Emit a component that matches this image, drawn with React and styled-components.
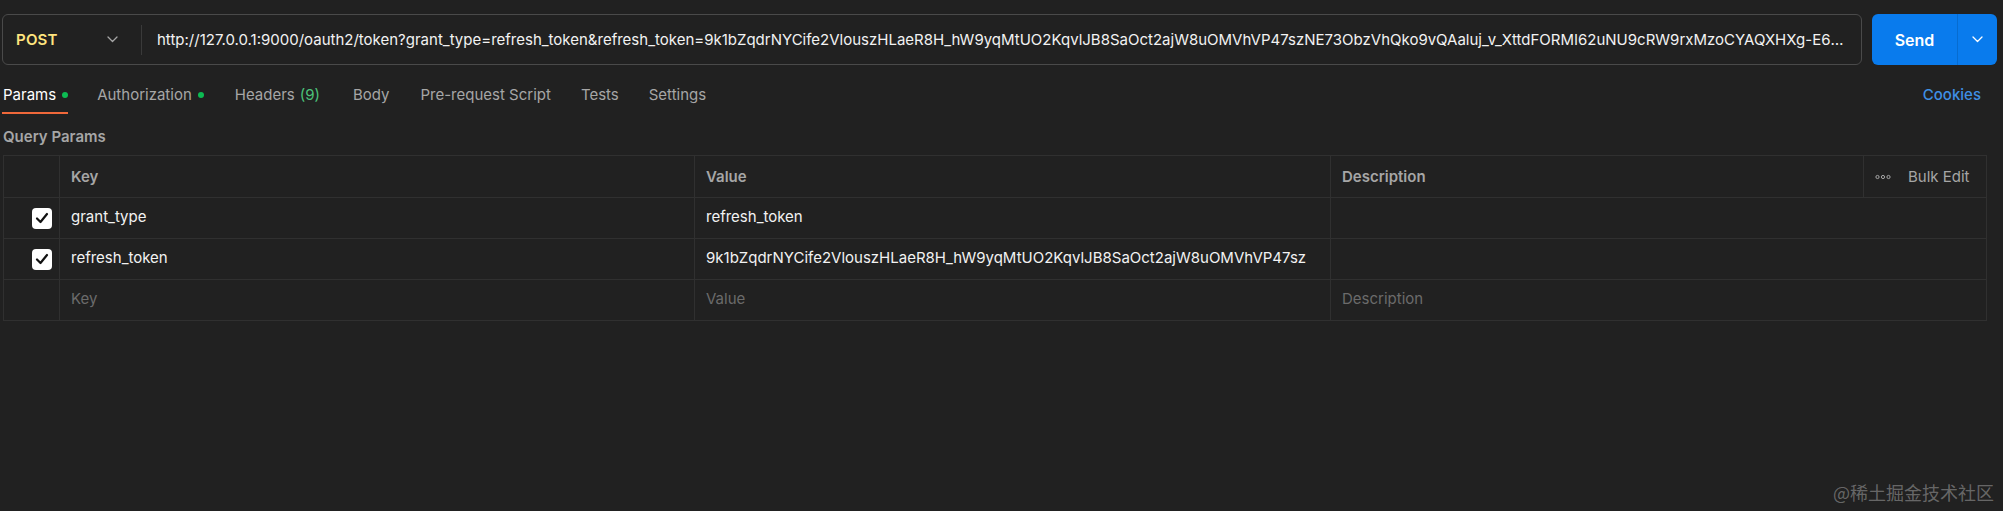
import React from "react";
import styled, { createGlobalStyle } from "styled-components";

const GlobalStyle = createGlobalStyle`
  html, body {
    margin: 0;
    padding: 0;
    background: #212121;
  }
  body {
    font-family: Inter, "Noto Sans", sans-serif;
    color: #ffffff;
    overflow: hidden;
  }
`;

const Page = styled.div`
  position: relative;
  height: 511px;
  padding: 14px 6px 0 2px;
  box-sizing: border-box;
`;

const TopRow = styled.div`
  display: flex;
  gap: 10px;
  height: 51px;
`;

const UrlBox = styled.div`
  flex: 1;
  min-width: 0;
  display: flex;
  align-items: center;
  border: 1px solid #4a4a4a;
  border-radius: 6px;
  box-sizing: border-box;
`;

const Method = styled.div`
  width: 138px;
  flex-shrink: 0;
  display: flex;
  align-items: center;
  justify-content: space-between;
  padding: 0 23px 0 13px;
  box-sizing: border-box;
  color: #ffe47e;
  font-weight: 600;
  font-size: 15px;
  letter-spacing: 0.2px;
`;

const Divider = styled.div`
  width: 1px;
  height: 30px;
  background: #3a3a3a;
  flex-shrink: 0;
`;

const UrlText = styled.div`
  flex: 1;
  min-width: 0;
  padding: 0 8px 0 15px;
  font-size: 15px;
  color: #f2f2f2;
  white-space: nowrap;
  overflow: hidden;
  text-overflow: ellipsis;
`;

const SendButton = styled.div`
  width: 125px;
  display: flex;
  background: #097bed;
  border-radius: 6px;
  overflow: hidden;
`;

const SendLabel = styled.div`
  width: 85px;
  display: flex;
  align-items: center;
  justify-content: center;
  font-weight: 600;
  font-size: 16px;
  color: #ffffff;
  border-right: 1px solid rgba(0, 0, 0, 0.12);
`;

const SendMore = styled.div`
  flex: 1;
  display: flex;
  align-items: center;
  justify-content: center;
`;

const Tabs = styled.div`
  display: flex;
  align-items: flex-end;
  margin-top: 15px;
  padding-right: 16px;
`;

const Tab = styled.div`
  display: flex;
  align-items: center;
  padding: 5px 0 7px 1px;
  margin-right: ${({ $gap }) => $gap || 29}px;
  line-height: 20px;
  font-size: 15px;
  color: ${({ $active }) => ($active ? "#ffffff" : "#a6a6a6")};
  border-bottom: 2px solid
    ${({ $active }) => ($active ? "#f0683a" : "transparent")};
`;

const Dot = styled.span`
  width: 6px;
  height: 6px;
  border-radius: 50%;
  background: #0cbb52;
  margin-left: 6px;
`;

const Count = styled.span`
  color: #4cc27a;
  margin-left: 5px;
`;

const Cookies = styled.div`
  margin-left: auto;
  padding: 5px 0 9px;
  line-height: 20px;
  font-size: 15px;
  font-weight: 500;
  color: #3f8fe4;
`;

const SectionTitle = styled.div`
  margin-top: 13px;
  padding-left: 1px;
  line-height: 20px;
  font-size: 15px;
  font-weight: 600;
  color: #a6a6a6;
`;

const Table = styled.div`
  margin: 8px 10px 0 1px;
  display: grid;
  grid-template-columns: 56px 635px 636px 1fr;
  border-top: 1px solid #303030;
  border-left: 1px solid #303030;
`;

const Cell = styled.div`
  display: flex;
  align-items: center;
  height: ${({ $head }) => ($head ? 42 : 41)}px;
  padding-left: ${({ $check }) => ($check ? 28 : 11)}px;
  padding-bottom: ${({ $head, $check }) => ($head || $check ? 0 : 3)}px;
  box-sizing: border-box;
  border-right: 1px solid #303030;
  border-bottom: 1px solid #303030;
  font-size: 15px;
  font-weight: ${({ $head }) => ($head ? 600 : 400)};
  color: ${({ $head, $ghost }) =>
    $head ? "#a6a6a6" : $ghost ? "#6b6b6b" : "#f2f2f2"};
  white-space: nowrap;
  overflow: hidden;
`;

const CellText = styled.span`
  flex: 1;
`;

const BulkEdit = styled.div`
  width: 123px;
  height: 100%;
  display: flex;
  align-items: center;
  gap: 17px;
  padding-left: 11px;
  box-sizing: border-box;
  border-left: 1px solid #303030;
  font-weight: 400;
  color: #a6a6a6;
`;

const Checkbox = styled.div`
  width: 20px;
  height: 21px;
  border-radius: 4px;
  background: #ffffff;
  display: flex;
  align-items: center;
  justify-content: center;
`;

const Watermark = styled.div`
  position: absolute;
  right: 9px;
  bottom: 6px;
  font-family: "Noto Sans CJK SC", sans-serif;
  font-size: 18px;
  color: rgba(255, 255, 255, 0.32);
`;

function Chevron({ color = "#a6a6a6" }) {
  return (
    <svg width="11" height="7" viewBox="0 0 11 7" fill="none">
      <polyline
        points="1,1 5.5,5.5 10,1"
        stroke={color}
        strokeWidth="1.3"
        strokeLinecap="round"
        strokeLinejoin="round"
      />
    </svg>
  );
}

function Check() {
  return (
    <svg width="14" height="12" viewBox="0 0 14 12" fill="none">
      <polyline
        points="2,6.5 5.5,10 12,2"
        stroke="#111"
        strokeWidth="2.2"
        strokeLinecap="round"
        strokeLinejoin="round"
      />
    </svg>
  );
}

function More() {
  return (
    <svg width="16" height="6" viewBox="0 0 16 6" fill="none">
      {[2.5, 8, 13.5].map((cx) => (
        <circle key={cx} cx={cx} cy="3" r="1.6" stroke="#a6a6a6" strokeWidth="1" />
      ))}
    </svg>
  );
}

const token =
  "9k1bZqdrNYCife2VlouszHLaeR8H_hW9yqMtUO2KqvlJB8SaOct2ajW8uOMVhVP47sz";
const url =
  "http://127.0.0.1:9000/oauth2/token?grant_type=refresh_token&refresh_token=" +
  token +
  "NE73ObzVhQko9vQAaluj_v_XttdFORMI62uNU9cRW9rxMzoCYAQXHXg-E6MnVb3kKq0";

const rows = [
  { key: "grant_type", value: "refresh_token" },
  { key: "refresh_token", value: token },
];

export default function App() {
  return (
    <>
      <GlobalStyle />
      <Page>
        <TopRow>
          <UrlBox>
            <Method>
              POST
              <Chevron />
            </Method>
            <Divider />
            <UrlText>{url}</UrlText>
          </UrlBox>
          <SendButton>
            <SendLabel>Send</SendLabel>
            <SendMore>
              <Chevron color="#ffffff" />
            </SendMore>
          </SendButton>
        </TopRow>

        <Tabs>
          <Tab $active $gap={28}>
            Params
            <Dot />
          </Tab>
          <Tab $gap={30}>
            Authorization
            <Dot />
          </Tab>
          <Tab $gap={32}>
            Headers<Count>(9)</Count>
          </Tab>
          <Tab $gap={30}>Body</Tab>
          <Tab>Pre-request Script</Tab>
          <Tab>Tests</Tab>
          <Tab>Settings</Tab>
          <Cookies>Cookies</Cookies>
        </Tabs>

        <SectionTitle>Query Params</SectionTitle>

        <Table>
          <Cell $head />
          <Cell $head>Key</Cell>
          <Cell $head>Value</Cell>
          <Cell $head>
            <CellText>Description</CellText>
            <BulkEdit>
              <More />
              Bulk Edit
            </BulkEdit>
          </Cell>

          {rows.map((r) => (
            <React.Fragment key={r.key}>
              <Cell $check>
                <Checkbox>
                  <Check />
                </Checkbox>
              </Cell>
              <Cell>{r.key}</Cell>
              <Cell>{r.value}</Cell>
              <Cell />
            </React.Fragment>
          ))}

          <Cell />
          <Cell $ghost>Key</Cell>
          <Cell $ghost>Value</Cell>
          <Cell $ghost>Description</Cell>
        </Table>

        <Watermark>@稀土掘金技术社区</Watermark>
      </Page>
    </>
  );
}
